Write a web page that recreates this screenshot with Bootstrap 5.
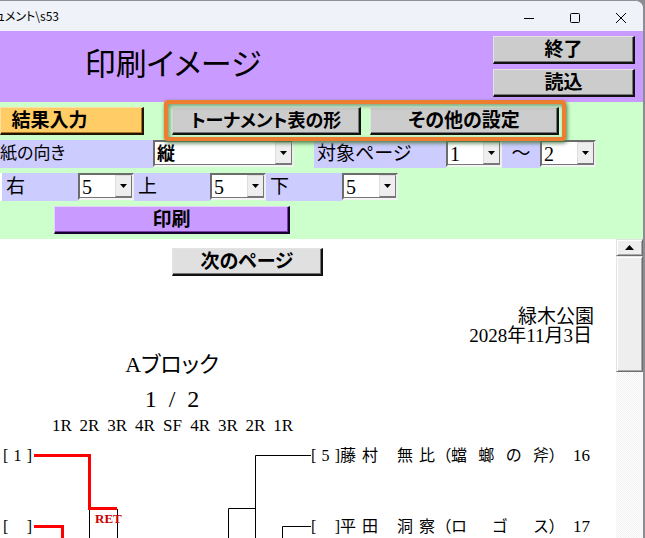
<!DOCTYPE html>
<html lang="ja">
<head>
<meta charset="utf-8">
<meta name="viewport" content="width=device-width, initial-scale=1">
<title>印刷イメージ</title>
<link rel="stylesheet" href="https://cdn.jsdelivr.net/npm/bootstrap@5.3.0/dist/css/bootstrap.min.css">
<style>
body{font-family:"Liberation Serif","Noto Sans CJK JP",serif;font-size:18px;line-height:20px;color:#000;background:#8c8c92;font-feature-settings:"palt"}
.win{min-height:100vh;margin-right:2px;background:#fff;border-top:1px solid #909096;border-top-right-radius:8px;overflow:hidden}
.titlebar{height:30px;background:#eff3f9;font-family:"Noto Sans CJK JP",sans-serif;font-size:12px}
.path-text{width:59px;white-space:nowrap;overflow:hidden}
.caps{margin-right:-1px}
.cap-btn{width:46px;height:30px;border:0;background:none;padding:0}
.banner{height:71px;background:#c99aff;padding:5px 8px 5px 0}
.banner h1{width:346px;font-size:31px;line-height:36px;margin:0;padding-top:11px;font-weight:400}
.key{height:28px;padding:0;border-radius:0;border:solid;border-width:1px 2px 2px 1px;border-color:#e3e3e3 #111 #111 #e3e3e3;background:#ccc;box-shadow:inset -1px -1px #777;font:700 19px/24px "Liberation Serif","Noto Sans CJK JP",serif;font-feature-settings:"palt";color:#000;text-align:center}
.key-side{width:142px}
.key-input{width:144px;background:#fc6;padding-right:44px;border-color:#ffe0a0 #221500 #221500 #ffe0a0;box-shadow:inset -1px -1px #a47522}
.key-wide{width:189px}
.key-shape{font-size:18px}
.key-print{width:236px;background:#c99aff;border-color:#e6d0ff #170030 #170030 #e6d0ff;box-shadow:inset -1px -1px #7840a8}
.key-next{width:151px;background:#e0e0e0}
.panel{background:#cfc;padding:5px 0}
.row-gap{gap:5px}
.pair{margin-left:28px;gap:9px}
.frame-mark{position:absolute;inset:-7px -7px -6px -8px;border:4px solid #ed7d31;border-radius:4px;box-shadow:1px 2px 4px #4a7a4a,inset 2px 2px 4px #7a9a7a;pointer-events:none}
.tag{height:28px;background:#ccf;font-size:19px;line-height:28px;white-space:nowrap}
.w-dir{width:153px;font-size:17px}.w-page{width:132px;padding-left:3px;margin-left:20px}.w-tilde{width:38px}.w-side{width:76px;padding-left:4px}
.combo{height:27px;border:2px solid;border-color:#6c6c6c #eee #f4f4f4 #6c6c6c;background:#fff;box-shadow:inset -1px -1px #777}
.combo select{appearance:none;border:0;outline:0;background:none;width:100%;min-width:0;padding:0 0 0 2px;font:20px/22px "Liberation Serif","Noto Sans CJK JP",serif;color:#000}
.combo-dir{width:141px}.combo-dir select{font-weight:700;font-size:18px}
.combo-num{width:56px}
.drop{width:17px;height:22px;flex:none;background:#eee;border:1px solid;border-color:#ddd #777 #777 #ddd;pointer-events:none}
.sheet{padding-top:9px}
.heading{width:344px}
.next-line{padding-left:172px}
.place{padding:31px 22px 0 0;font-size:19px;line-height:19px}
.day{padding-right:2px}
.block-name{font-size:22px;line-height:34px;padding-top:3px}
.page-no{font-size:24px}
.rounds{width:249px;margin-left:48px;display:grid;grid-template-columns:repeat(9,1fr);font-size:17px;line-height:20px;text-align:center;white-space:nowrap}
.seeds{width:34px;padding-left:3px}
.entries{font-size:16px;line-height:20px;padding-top:4px}
.entry{height:31px;margin-bottom:40px;padding-top:6px;white-space:nowrap}
.seed{width:29px}
.spread{text-align:justify;text-align-last:justify;font-feature-settings:normal}
.w-name{width:38px}.w-club{width:98px}.w-no{margin-left:16px;font-size:17px}
.w-given{margin-left:19px}.open{margin-left:8px}
.lines{width:277px;height:98px;flex:none}
.rail{width:27px;flex:none;background:repeating-conic-gradient(#f0f0f0 0 25%,#fff 0 50%) 0 0/2px 2px}
.raised{background:#eee;border:1px solid;border-color:#e3e3e3 #6c6c6c #6c6c6c #e3e3e3;box-shadow:inset 1px 1px #fff,inset -1px -1px #aaa;width:100%;padding:0}
.up{height:17px;line-height:0}.thumb{height:116px}
</style>
<script src="https://cdn.jsdelivr.net/npm/bootstrap@5.3.0/dist/js/bootstrap.bundle.min.js"></script>
</head>
<body>
<div class="win d-flex flex-column">
  <div class="titlebar d-flex align-items-center justify-content-between">
    <div class="path-text d-flex justify-content-end"><span>キュメント\s53</span></div>
    <div class="caps d-flex">
      <button class="cap-btn" aria-label="最小化"><svg width="12" height="12" viewBox="0 0 12 12"><path d="M1 6.5h10" stroke="#000"/></svg></button>
      <button class="cap-btn" aria-label="最大化"><svg width="12" height="12" viewBox="0 0 12 12"><rect x="1.5" y="1.5" width="9" height="9" rx="1" fill="none" stroke="#000"/></svg></button>
      <button class="cap-btn" aria-label="閉じる"><svg width="12" height="12" viewBox="0 0 12 12"><path d="M1 1l10 10M11 1L1 11" stroke="#000"/></svg></button>
    </div>
  </div>

  <header class="banner d-flex justify-content-between">
    <h1 class="text-center">印刷イメージ</h1>
    <div class="d-flex flex-column row-gap">
      <button class="key key-side">終了</button>
      <button class="key key-side">読込</button>
    </div>
  </header>

  <form class="panel d-flex flex-column row-gap">
    <div class="d-flex">
      <button type="button" class="key key-input">結果入力</button>
      <div class="pair d-flex position-relative">
        <button type="button" class="key key-wide key-shape">トーナメント表の形</button>
        <button type="button" class="key key-wide">その他の設定</button>
        <span class="frame-mark"></span>
      </div>
    </div>
    <div class="d-flex">
      <label class="tag w-dir" for="dir">紙の向き</label>
      <div class="combo combo-dir d-flex"><select id="dir"><option>縦</option><option>横</option></select><span class="drop d-flex align-items-center justify-content-center"><svg width="7" height="4"><path d="M0 0h7L3.500 4z"/></svg></span></div>
      <label class="tag w-page" for="from">対象ページ</label>
      <div class="combo combo-num d-flex"><select id="from"><option>1</option><option>2</option></select><span class="drop d-flex align-items-center justify-content-center"><svg width="7" height="4"><path d="M0 0h7L3.500 4z"/></svg></span></div>
      <label class="tag w-tilde text-center" for="to">～</label>
      <div class="combo combo-num d-flex"><select id="to"><option>2</option><option>1</option></select><span class="drop d-flex align-items-center justify-content-center"><svg width="7" height="4"><path d="M0 0h7L3.500 4z"/></svg></span></div>
    </div>
    <div class="d-flex border-start border-2 border-white">
      <label class="tag w-side" for="right">右</label>
      <div class="combo combo-num d-flex"><select id="right"><option>5</option></select><span class="drop d-flex align-items-center justify-content-center"><svg width="7" height="4"><path d="M0 0h7L3.500 4z"/></svg></span></div>
      <label class="tag w-side" for="top">上</label>
      <div class="combo combo-num d-flex"><select id="top"><option>5</option></select><span class="drop d-flex align-items-center justify-content-center"><svg width="7" height="4"><path d="M0 0h7L3.500 4z"/></svg></span></div>
      <label class="tag w-side" for="bottom">下</label>
      <div class="combo combo-num d-flex"><select id="bottom"><option>5</option></select><span class="drop d-flex align-items-center justify-content-center"><svg width="7" height="4"><path d="M0 0h7L3.500 4z"/></svg></span></div>
    </div>
    <div class="heading"><button type="button" class="key key-print d-block mx-auto">印刷</button></div>
  </form>

  <div class="d-flex flex-grow-1">
    <main class="sheet flex-grow-1">
      <div class="next-line"><button class="key key-next d-block">次のページ</button></div>
      <div class="place text-end"><div>緑木公園</div><div class="day">2028年11月3日</div></div>
      <div class="heading text-center block-name"><div>Aブロック</div><div class="page-no">1&nbsp; /&nbsp; 2</div></div>
      <div class="rounds"><span>1R</span><span>2R</span><span>3R</span><span>4R</span><span>SF</span><span>4R</span><span>3R</span><span>2R</span><span>1R</span></div>
      <div class="entries d-flex">
        <div class="seeds">
          <div class="entry"><div class="seed d-flex justify-content-between"><span>[</span><span>1</span><span>]</span></div></div>
          <div class="entry mb-0"><div class="seed d-flex justify-content-between"><span>[</span><span>]</span></div></div>
        </div>
        <svg class="lines" viewBox="0 0 277 98" fill="none">
          <path d="M55.500 70V98M83.500 69V98M277 15.500H221.500V98M221.500 68.500H194.500V98M277 86.500H248.500V98" stroke="#000"/>
          <path d="M0 15.500H55.500V68.500H83M0 86.500H28.500V98" stroke="#f00" stroke-width="3"/>
          <text x="61" y="83" fill="#c00" font-size="13" font-weight="700">RET</text>
        </svg>
        <div>
          <div class="entry d-flex"><div class="seed d-flex justify-content-between"><span>[</span><span>5</span><span>]</span></div><span class="spread w-name">藤村</span><span class="spread w-name w-given">無比</span><span class="open">（</span><span class="spread w-club">蟷螂の斧</span><span>）</span><span class="w-no">16</span></div>
          <div class="entry d-flex mb-0"><div class="seed d-flex justify-content-between"><span>[</span><span>]</span></div><span class="spread w-name">平田</span><span class="spread w-name w-given">洞察</span><span class="open">（</span><span class="spread w-club">ロゴス</span><span>）</span><span class="w-no">17</span></div>
        </div>
      </div>
    </main>
    <div class="rail">
      <button class="raised up d-block" aria-label="上へスクロール"><svg width="9" height="5"><path d="M0 5h9L4.500 0z"/></svg></button>
      <div class="raised thumb"></div>
    </div>
  </div>
</div>
</body>
</html>
